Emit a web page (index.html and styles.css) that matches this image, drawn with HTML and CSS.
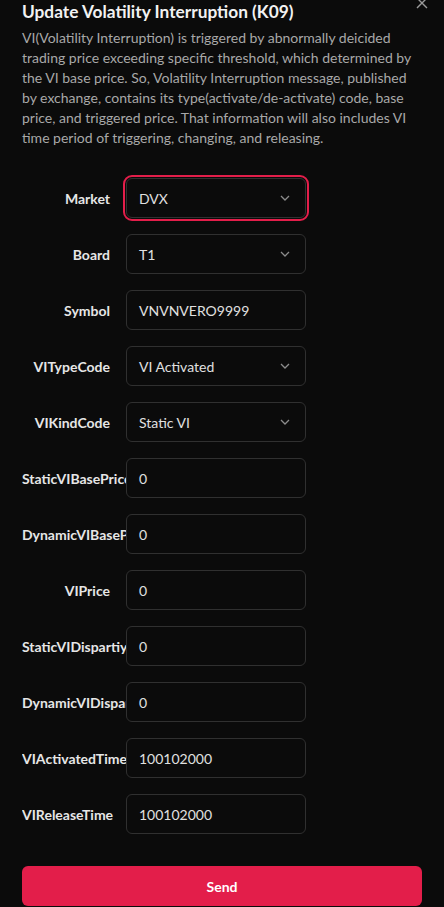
FILE: index.html
```html
<!DOCTYPE html>
<html>
<head>
<meta charset="utf-8">
<link rel="stylesheet" href="styles.css">
</head>
<body>
<div class="modal">
  <button class="close" aria-label="close">
    <svg width="12" height="12" viewBox="0 0 12 12"><path d="M1 1L11 11M11 1L1 11" stroke="#9a9a9a" stroke-width="1.4" fill="none"/></svg>
  </button>
  <h1 class="title">Update Volatility Interruption (K09)</h1>
  <p class="desc">VI(Volatility Interruption) is triggered by abnormally deicided trading price exceeding specific threshold, which determined by the VI base price. So, Volatility Interruption message, published by exchange, contains its type(activate/de-activate) code, base price, and triggered price. That information will also includes VI time period of triggering, changing, and releasing.</p>
  <form class="form">
    <div class="row">
      <div class="label"><span>Market</span></div>
      <div class="field select focused"><span class="value">DVX</span><svg class="chev" width="10" height="6" viewBox="0 0 10 6"><path d="M1 1L5 5L9 1" stroke="#8c8c8c" stroke-width="1.3" fill="none"/></svg></div>
    </div>
    <div class="row">
      <div class="label"><span>Board</span></div>
      <div class="field select"><span class="value">T1</span><svg class="chev" width="10" height="6" viewBox="0 0 10 6"><path d="M1 1L5 5L9 1" stroke="#8c8c8c" stroke-width="1.3" fill="none"/></svg></div>
    </div>
    <div class="row">
      <div class="label"><span>Symbol</span></div>
      <div class="field"><span class="value">VNVNVERO9999</span></div>
    </div>
    <div class="row">
      <div class="label"><span>VITypeCode</span></div>
      <div class="field select"><span class="value">VI Activated</span><svg class="chev" width="10" height="6" viewBox="0 0 10 6"><path d="M1 1L5 5L9 1" stroke="#8c8c8c" stroke-width="1.3" fill="none"/></svg></div>
    </div>
    <div class="row">
      <div class="label"><span>VIKindCode</span></div>
      <div class="field select"><span class="value">Static VI</span><svg class="chev" width="10" height="6" viewBox="0 0 10 6"><path d="M1 1L5 5L9 1" stroke="#8c8c8c" stroke-width="1.3" fill="none"/></svg></div>
    </div>
    <div class="row">
      <div class="label"><span>StaticVIBasePrice</span></div>
      <div class="field"><span class="value">0</span></div>
    </div>
    <div class="row">
      <div class="label"><span>DynamicVIBasePrice</span></div>
      <div class="field"><span class="value">0</span></div>
    </div>
    <div class="row">
      <div class="label"><span>VIPrice</span></div>
      <div class="field"><span class="value">0</span></div>
    </div>
    <div class="row">
      <div class="label"><span>StaticVIDispartiyRatio</span></div>
      <div class="field"><span class="value">0</span></div>
    </div>
    <div class="row">
      <div class="label"><span>DynamicVIDispartiyRatio</span></div>
      <div class="field"><span class="value">0</span></div>
    </div>
    <div class="row">
      <div class="label"><span>VIActivatedTime</span></div>
      <div class="field"><span class="value">100102000</span></div>
    </div>
    <div class="row">
      <div class="label"><span>VIReleaseTime</span></div>
      <div class="field"><span class="value">100102000</span></div>
    </div>
    <button type="button" class="send">Send</button>
  </form>
</div>
</body>
</html>
```

FILE: styles.css
```css
html, body {
  margin: 0;
  padding: 0;
  background: #0b0b0b;
}
body {
  font-family: "Lato", "Liberation Sans", sans-serif;
  color: #e6e6e6;
  font-size: 14px;
}
.modal {
  position: relative;
  padding: 0 22px;
}
.close {
  position: absolute;
  top: -3px;
  right: 16px;
  background: none;
  border: none;
  padding: 0;
  width: 12px;
  height: 12px;
  display: flex;
}
.title {
  margin: 0;
  font-size: 17.3px;
  line-height: 24px;
  font-weight: 700;
  color: #f2f2f2;
}
.desc {
  margin: 4px 0 0;
  font-size: 14px;
  line-height: 20px;
  color: #a8a8a8;
}
.form {
  margin-top: 30px;
  display: flex;
  flex-direction: column;
}
.row {
  display: flex;
  align-items: center;
  height: 40px;
  margin-bottom: 16px;
}
.label {
  width: 104px;
  flex: none;
  overflow: hidden;
  white-space: nowrap;
  text-align: right;
  font-weight: 700;
  color: #e6e6e6;
}
.label span {
  padding-right: 16px;
}
.field {
  box-sizing: border-box;
  width: 180px;
  height: 40px;
  border: 1px solid #303030;
  border-radius: 6px;
  background: #0b0b0b;
  display: flex;
  align-items: center;
  padding: 0 15px 0 12px;
  color: #e0e0e0;
}
.field .value {
  flex: 1;
}
.focused {
  outline: 2px solid #e31e4a;
  outline-offset: 1px;
}
.chev {
  flex: none;
}
.send {
  margin-top: 16px;
  height: 40px;
  border: none;
  border-radius: 6px;
  background: #e31e4a;
  color: #ffffff;
  font-family: inherit;
  font-size: 14px;
  font-weight: 700;
}
```
